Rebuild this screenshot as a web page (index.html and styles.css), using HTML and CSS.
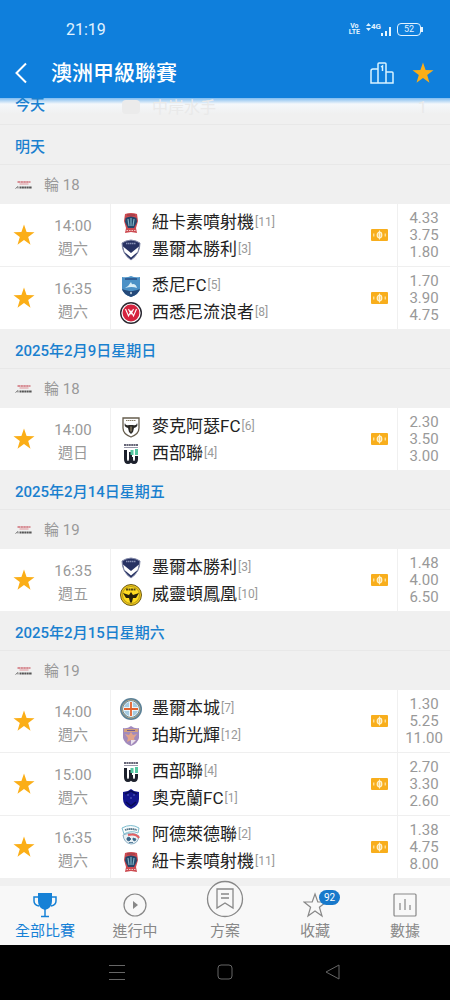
FILE: index.html
```html
<!DOCTYPE html>
<html lang="zh-Hant">
<head>
    <meta charset="UTF-8">
    <meta name="viewport" content="width=device-width, initial-scale=1">
    <title>澳洲甲級聯賽</title>
    <link rel="stylesheet" href="styles.css">
</head>
<body>
<svg class="sprite" aria-hidden="true">
    <symbol id="star" viewBox="0 0 22 22">
        <path d="M11 .5l2.600 7.500 7.900.2-6.300 4.800 2.300 7.700-6.500-4.600-6.500 4.600L6.800 13 .5 8.200 8.400 8z"/>
    </symbol>
    <symbol id="league" viewBox="0 0 18 12">
        <path d="M2.500 3h13" fill="none" stroke="#cf6f78" stroke-width="1.600" stroke-dasharray="2.500 .4"/>
        <path d="M4.500 5h9" fill="none" stroke="#e2a3a8" stroke-width="1.200"/>
        <path d="M.5 9.500L3 7.500v2" fill="none" stroke="#777"/>
        <path d="M4.500 8.500H17" fill="none" stroke="#555" stroke-width="2.200" stroke-dasharray="2 .4"/>
    </symbol>
    <symbol id="cash" viewBox="0 0 17 12">
        <rect width="17" height="12" rx="1" fill="#f8ae1c"/>
        <ellipse cx="8.500" cy="6" rx="2.300" ry="2.800" fill="#fbcf72" stroke="#fff3cf" stroke-width="1.200"/>
        <path d="M8.500 1.500v9M2.800 4.500v3M14.200 4.500v3" stroke="#fff3cf" stroke-width="1"/>
    </symbol>
    <symbol id="jets" viewBox="0 0 22 22">
        <path d="M5 2q6-2 12 0l1 7-2 7 1 5-6-1-6 1 1-5-2-7z" fill="#cc4a50"/>
        <path d="M5.500 6q5.500-3 11 0l.5 4-3 6H8l-3-6z" fill="#24466a"/>
        <path d="M8 7l1 7M11 6v8M14 7l-1 7" stroke="#7db2c4" stroke-width="1.200"/>
        <path d="M7 3h8" stroke="#8e3745" stroke-width="1"/>
        <path d="M6.500 18.500h9" stroke="#f2c5c4" stroke-width="1.200" stroke-dasharray="1.500 1"/>
    </symbol>
    <symbol id="victory" viewBox="0 0 22 22">
        <path d="M2 4l4-2 5-1 5 1 4 2q0 11-9 17Q2 15 2 4z" fill="#273263" stroke="#8389a8"/>
        <path d="M3 7.500l8 6.500 8-6.500-1.500 5.500L11 18.500 4.500 13z" fill="#fff"/>
        <path d="M6 4.500h10" stroke="#8790b4" stroke-width="1.500" stroke-dasharray="1.500 .5"/>
    </symbol>
    <symbol id="sydney" viewBox="0 0 22 22">
        <path d="M2 2q5 1 9-1 4 2 9 1v12q-1 5-9 8-8-3-9-8z" fill="#4b91c6"/>
        <path d="M2 14q6 2 9 2t9-2q-1 5-9 8-8-3-9-8z" fill="#244979"/>
        <path d="M5 13q4-2 6-6 1 3 2 2 3 0 4 4-5-2-12 0z" fill="#d9eef7"/>
        <path d="M5 4h12" stroke="#315f96" stroke-width="2"/>
        <path d="M11 16.500l1 1.500-1 1.500-1-1.500z" fill="#e8f3f7"/>
    </symbol>
    <symbol id="wanderers" viewBox="0 0 22 22">
        <circle cx="11" cy="11" r="11" fill="#292730"/>
        <circle cx="11" cy="11" r="9" fill="#d5233e" stroke="#fff" stroke-width="1.200"/>
        <path d="M5.500 7l3 7L11 9l2.500 5 3-7M8.500 7l2.500 5 2.500-5" fill="none" stroke="#fff" stroke-width="1.100"/>
    </symbol>
    <symbol id="macarthur" viewBox="0 0 22 22">
        <path d="M3 2h16v10q0 6-8 9-8-3-8-9z" fill="#fff" stroke="#665d4d" stroke-width="1.300"/>
        <path d="M6 4.500h10" stroke="#8c8068" stroke-width="1.200" stroke-dasharray="1.500 .5"/>
        <path d="M5 6.500q0 3.500 4 2.500h4q4 1 4-2.500 1.500 4.500-3 5.500l-1 4-2 2-2-2-1-4q-4.500-1-3-5.500z" fill="#2b2926"/>
        <path d="M11 10.500v5" stroke="#b5a47e" stroke-width="1"/>
    </symbol>
    <symbol id="western" viewBox="0 0 22 22">
        <path d="M4 2h14" stroke="#667" stroke-width="2" stroke-dasharray="2 .4"/>
        <path d="M4 4.500h14" stroke="#99a" stroke-width="1"/>
        <path d="M5.500 7v9q0 3.500 2.500 3.500T10.500 16V9M11.500 14v2q0 3.500 2.500 3.500T16.500 16v-3" fill="none" stroke="#1c202c" stroke-width="3"/>
        <path d="M10.500 7h3v5h-3zM15 6h3v6h-3z" fill="#55c8a2"/>
    </symbol>
    <symbol id="phoenix" viewBox="0 0 22 22">
        <circle cx="11" cy="11" r="10.500" fill="#eec51b" stroke="#6d5c16"/>
        <circle cx="11" cy="11" r="8.500" fill="#ffdc21" stroke="#b79d19"/>
        <path d="M3 9l6 2 2-3 2 3 6-2-3 5-3 0-1 4-1 1-1-1-1-4-3 0z" fill="#29230b"/>
        <path d="M6 5.500h10" stroke="#524610" stroke-width="2" stroke-dasharray="2 .5"/>
    </symbol>
    <symbol id="city" viewBox="0 0 22 22">
        <circle cx="11" cy="11" r="11" fill="#5b8197"/>
        <circle cx="11" cy="11" r="9" fill="none" stroke="#b2a789"/>
        <circle cx="11" cy="11" r="7.500" fill="#a5cce2" stroke="#e8f1f3"/>
        <path d="M11 4v14M4 11h14" stroke="#fff" stroke-width="3.500"/>
        <path d="M11 4v14M4 11h14" stroke="#e3632e" stroke-width="1.800"/>
    </symbol>
    <symbol id="perth" viewBox="0 0 22 22">
        <path d="M3 3q4 1 8-2 4 3 8 2v10q-1 5-8 8-7-3-8-8z" fill="#a28abc"/>
        <path d="M4 4h14v3H4z" fill="#d4a07d"/>
        <path d="M5 9l4 1 2-3 2 3 4-1-3 4 1 4-4-2-4 2 1-4z" fill="#e1a38a"/>
        <path d="M11 15h5l-5 5z" fill="#e9e1ec"/>
        <path d="M7 5.500h8" stroke="#715b91"/>
    </symbol>
    <symbol id="auckland" viewBox="0 0 22 22">
        <path d="M3 4l5-1 3-2 3 2 5 1v7q0 7-8 10-8-3-8-10z" fill="#13158d"/>
        <path d="M5 6l6-3 6 3M6 14l5 4 5-4" fill="none" stroke="#080c54" stroke-width="1.500"/>
        <path d="M7 7h2M13 7h2M10 10h2" stroke="#5e66c0"/>
    </symbol>
    <symbol id="adelaide" viewBox="0 0 22 22">
        <path d="M3 11q9-4 16 1-1 8-8 8-7-1-8-9z" fill="#e8f0f4" stroke="#8aaec4"/>
        <path d="M2 4q9-5 17 0l-1 5q-7-3-14 1z" fill="#f7fbfc" stroke="#7fbed0"/>
        <path d="M5 6q6-2 12 0" fill="none" stroke="#58788c" stroke-width="1.800" stroke-dasharray="1.500 .4"/>
        <path d="M8 11q8-2 11 3" fill="none" stroke="#e45f62" stroke-width="2"/>
        <path d="M7 14l2-1 2 2-2 2-2-1zM13 14l3 1-1 2-2-1zM9 18.500h4" fill="#386487" stroke="#386487" stroke-width=".8"/>
    </symbol>
</svg>

<header class="header">
    <div class="status">
        <span class="clock">21:19</span>
        <div class="status-icons">
            <span class="volte"><span>Vo</span><span>LTE</span></span>
            <span class="signal">
                <svg width="5" height="8" viewBox="0 0 5 8" aria-hidden="true">
                    <path d="M0 3l2.500-3L5 3zM0 5h5L2.500 8z" fill="#d9efff"/>
                </svg>
                <span>4G</span>
                <svg width="12" height="9" viewBox="0 0 12 9" aria-hidden="true">
                    <path d="M0 6h2v3H0zM4 4h2v5H4zM8 0h2v9H8z" fill="#e9f7ff"/>
                </svg>
            </span>
            <span class="battery">52</span>
        </div>
    </div>
    <div class="titlebar">
        <button class="icon-btn" aria-label="返回">
            <svg width="14" height="22" viewBox="0 0 14 22"><path d="M12 1.500L2.500 11l9.500 9.500" fill="none" stroke="#fff" stroke-width="2"/></svg>
        </button>
        <h1>澳洲甲級聯賽</h1>
        <button class="icon-btn" aria-label="積分榜">
            <svg width="24" height="22" viewBox="0 0 24 22"><path d="M8 7H3q-2 0-2 2v12h22V11q0-1-1-1h-6M8 21V2q0-1 1-1h6q1 0 1 1v19M11 5l1.500-1v5" fill="none" stroke="#d9f3ff" stroke-width="1.500"/></svg>
        </button>
        <button class="icon-btn" aria-label="收藏聯賽">
            <svg class="star" width="22" height="22"><use href="#star"/></svg>
        </button>
    </div>
</header>

<main class="list">
    <div class="today">
        <h2>今天</h2>
        <div class="ghost" aria-hidden="true"><i></i><span>中岸水手</span><span class="ghost-score">1</span></div>
    </div>

    <section>
        <h2 class="day">明天</h2>
        <div class="round"><svg width="18" height="12"><use href="#league"/></svg>輪 18</div>
        <article class="match">
            <button class="fav" aria-label="收藏"><svg class="star" width="22" height="22"><use href="#star"/></svg></button>
            <div class="time"><span>14:00</span><span>週六</span></div>
            <div class="teams">
                <div class="team"><svg><use href="#jets"/></svg>紐卡素噴射機<small>[11]</small></div>
                <div class="team"><svg><use href="#victory"/></svg>墨爾本勝利<small>[3]</small></div>
            </div>
            <svg class="cash"><use href="#cash"/></svg>
            <div class="odds"><span>4.33</span><span>3.75</span><span>1.80</span></div>
        </article>
        <article class="match">
            <button class="fav" aria-label="收藏"><svg class="star" width="22" height="22"><use href="#star"/></svg></button>
            <div class="time"><span>16:35</span><span>週六</span></div>
            <div class="teams">
                <div class="team"><svg><use href="#sydney"/></svg>悉尼FC<small>[5]</small></div>
                <div class="team"><svg><use href="#wanderers"/></svg>西悉尼流浪者<small>[8]</small></div>
            </div>
            <svg class="cash"><use href="#cash"/></svg>
            <div class="odds"><span>1.70</span><span>3.90</span><span>4.75</span></div>
        </article>
    </section>

    <section>
        <h2 class="day">2025年2月9日星期日</h2>
        <div class="round"><svg width="18" height="12"><use href="#league"/></svg>輪 18</div>
        <article class="match">
            <button class="fav" aria-label="收藏"><svg class="star" width="22" height="22"><use href="#star"/></svg></button>
            <div class="time"><span>14:00</span><span>週日</span></div>
            <div class="teams">
                <div class="team"><svg><use href="#macarthur"/></svg>麥克阿瑟FC<small>[6]</small></div>
                <div class="team"><svg><use href="#western"/></svg>西部聯<small>[4]</small></div>
            </div>
            <svg class="cash"><use href="#cash"/></svg>
            <div class="odds"><span>2.30</span><span>3.50</span><span>3.00</span></div>
        </article>
    </section>

    <section>
        <h2 class="day">2025年2月14日星期五</h2>
        <div class="round"><svg width="18" height="12"><use href="#league"/></svg>輪 19</div>
        <article class="match">
            <button class="fav" aria-label="收藏"><svg class="star" width="22" height="22"><use href="#star"/></svg></button>
            <div class="time"><span>16:35</span><span>週五</span></div>
            <div class="teams">
                <div class="team"><svg><use href="#victory"/></svg>墨爾本勝利<small>[3]</small></div>
                <div class="team"><svg><use href="#phoenix"/></svg>威靈頓鳳凰<small>[10]</small></div>
            </div>
            <svg class="cash"><use href="#cash"/></svg>
            <div class="odds"><span>1.48</span><span>4.00</span><span>6.50</span></div>
        </article>
    </section>

    <section>
        <h2 class="day">2025年2月15日星期六</h2>
        <div class="round"><svg width="18" height="12"><use href="#league"/></svg>輪 19</div>
        <article class="match">
            <button class="fav" aria-label="收藏"><svg class="star" width="22" height="22"><use href="#star"/></svg></button>
            <div class="time"><span>14:00</span><span>週六</span></div>
            <div class="teams">
                <div class="team"><svg><use href="#city"/></svg>墨爾本城<small>[7]</small></div>
                <div class="team"><svg><use href="#perth"/></svg>珀斯光輝<small>[12]</small></div>
            </div>
            <svg class="cash"><use href="#cash"/></svg>
            <div class="odds"><span>1.30</span><span>5.25</span><span>11.00</span></div>
        </article>
        <article class="match">
            <button class="fav" aria-label="收藏"><svg class="star" width="22" height="22"><use href="#star"/></svg></button>
            <div class="time"><span>15:00</span><span>週六</span></div>
            <div class="teams">
                <div class="team"><svg><use href="#western"/></svg>西部聯<small>[4]</small></div>
                <div class="team"><svg><use href="#auckland"/></svg>奧克蘭FC<small>[1]</small></div>
            </div>
            <svg class="cash"><use href="#cash"/></svg>
            <div class="odds"><span>2.70</span><span>3.30</span><span>2.60</span></div>
        </article>
        <article class="match">
            <button class="fav" aria-label="收藏"><svg class="star" width="22" height="22"><use href="#star"/></svg></button>
            <div class="time"><span>16:35</span><span>週六</span></div>
            <div class="teams">
                <div class="team"><svg><use href="#adelaide"/></svg>阿德萊德聯<small>[2]</small></div>
                <div class="team"><svg><use href="#jets"/></svg>紐卡素噴射機<small>[11]</small></div>
            </div>
            <svg class="cash"><use href="#cash"/></svg>
            <div class="odds"><span>1.38</span><span>4.75</span><span>8.00</span></div>
        </article>
    </section>
</main>

<nav class="tabs">
    <a class="tab active" href="#all">
        <svg width="24" height="26" viewBox="0 0 24 26">
            <path d="M5 1h14v8q0 7-7 9-7-2-7-9z" fill="currentColor"/>
            <path d="M5 5H1v4q0 4 5 5M19 5h4v4q0 4-5 5M12 17v7M8 24.500h8" fill="none" stroke="currentColor" stroke-width="1.500"/>
        </svg>
        全部比賽
    </a>
    <a class="tab" href="#live">
        <svg width="24" height="26" viewBox="0 0 24 26">
            <circle cx="12" cy="13" r="11" fill="none" stroke="currentColor" stroke-width="1.200"/>
            <path d="M10 9l5 4-5 4z" fill="currentColor"/>
        </svg>
        進行中
    </a>
    <a class="tab plan" href="#plan">
        <svg width="38" height="38" viewBox="0 0 38 38">
            <circle cx="19" cy="19" r="17.500" fill="#f8f8f8" stroke="currentColor" stroke-width="1.300"/>
            <path d="M11 9h16v19l-8-5-8 5zM15 14h8M15 18h8" fill="none" stroke="currentColor" stroke-width="1.300"/>
        </svg>
        方案
    </a>
    <a class="tab" href="#favourites">
        <span class="badge-wrap">
            <svg width="24" height="26" viewBox="0 0 24 26"><path d="M12 2l2.800 8H23l-6.600 5.200L19 24l-7-5-7 5 2.600-8.800L1 10h8.200z" fill="none" stroke="currentColor" stroke-width="1.200"/></svg>
            <span class="badge">92</span>
        </span>
        收藏
    </a>
    <a class="tab" href="#stats">
        <svg width="24" height="26" viewBox="0 0 24 26"><rect x="1" y="2" width="22" height="22" rx="1" fill="none" stroke="currentColor" stroke-width="1.200"/><path d="M7 11v7M12 7v11M17 13v5" stroke="currentColor" stroke-width="1.200"/></svg>
        數據
    </a>
</nav>

<div class="system">
    <button aria-label="最近"><svg width="16" height="16" viewBox="0 0 16 16"><path d="M0 1.500h16M0 8.500h16M0 15.500h16"/></svg></button>
    <button aria-label="主畫面"><svg width="16" height="16" viewBox="0 0 16 16"><rect x="1" y="1" width="14" height="14" rx="3"/></svg></button>
    <button aria-label="上一頁"><svg width="16" height="16" viewBox="0 0 16 16"><path d="M1 8l13-7v14z" stroke-linejoin="round"/></svg></button>
</div>
</body>
</html>
```

FILE: styles.css
```css
* {
    box-sizing: border-box;
    margin: 0;
    padding: 0;
}

body {
    display: flex;
    flex-direction: column;
    min-height: 100vh;
    font-family: Roboto, "Noto Sans CJK TC", sans-serif;
    font-size: 15px;
    color: #999;
    background: #f0f0f0;
}

button {
    font: inherit;
    color: inherit;
    background: none;
    border: none;
    cursor: pointer;
}

a {
    text-decoration: none;
}

svg {
    display: block;
    flex: none;
}

.sprite {
    position: absolute;
    width: 0;
    height: 0;
}

.star {
    fill: #fbae17;
}

/* header */
.header {
    padding: 18px 16px 10px 14px;
    color: #fff;
    background: #0f7fdc;
}

.status {
    display: flex;
    justify-content: space-between;
    align-items: center;
    height: 22px;
    padding: 0 13px 0 52px;
    color: #e3f3ff;
}

.clock {
    font-size: 16px;
}

.status-icons {
    display: flex;
    align-items: center;
    gap: 6px;
}

.volte {
    display: flex;
    flex-direction: column;
    align-items: center;
    font-size: 7px;
    line-height: 6px;
    font-weight: 700;
}

.signal {
    display: grid;
    grid-template-columns: 5px 10px 10px;
    align-items: start;
    font-size: 8px;
    line-height: 8px;
    font-weight: 700;
}

.signal svg:last-child {
    margin-top: 4px;
}

.battery {
    position: relative;
    width: 24px;
    border: 1px solid #e3f3ff;
    border-radius: 4px;
    font-size: 9px;
    line-height: 11px;
    text-align: center;
}

.battery::after {
    content: "";
    position: absolute;
    top: 3px;
    right: -3px;
    width: 2px;
    height: 5px;
    background: #e3f3ff;
}

.titlebar {
    display: flex;
    align-items: center;
    gap: 18px;
    margin-top: 18px;
}

.titlebar h1 {
    flex: 1;
    padding-left: 5px;
    font-size: 21px;
    font-weight: 500;
    line-height: 30px;
}

/* fixtures */
.list {
    flex: 1;
    padding-bottom: 8px;
}

.day,
.today {
    padding: 5px 15px 0;
    border-bottom: 1px solid #e8e8e8;
    color: #1a80cf;
    font-size: 15px;
    font-weight: 500;
    line-height: 34px;
}

.today {
    display: flex;
    padding: 0 15px 11px;
    background: linear-gradient(#7fbcf0, #f5f8fb 6px, #f0f0f0 16px);
    line-height: 15px;
}

.today h2 {
    font-size: 15px;
    font-weight: 500;
}

.ghost {
    display: flex;
    flex: 1;
    align-items: center;
    gap: 12px;
    height: 15px;
    padding: 3px 8px 0 77px;
    color: #e9e9e9;
    font-size: 16px;
    font-weight: 400;
}

.ghost i {
    width: 18px;
    height: 14px;
    border-radius: 4px;
    background: #ebebeb;
}

.ghost-score {
    margin-left: auto;
}

.round {
    display: flex;
    align-items: center;
    gap: 11px;
    padding: 1px 15px 0;
    line-height: 38px;
}

.match {
    display: flex;
    align-items: center;
    background: #fff;
}

.match + .match {
    border-top: 1px solid #efefef;
}

.fav {
    padding: 0 13px;
}

.time {
    display: flex;
    flex-direction: column;
    width: 50px;
    padding-top: 5px;
    text-align: center;
    line-height: 23px;
}

.teams {
    flex: 1;
    margin-left: 12px;
    padding: 5px 0 3px 9px;
    border-left: 1px solid #f0f0f0;
}

.team {
    display: flex;
    align-items: center;
    color: #222;
    font-size: 17px;
    line-height: 27px;
}

.team svg {
    width: 22px;
    height: 22px;
    margin-right: 10px;
}

.team small {
    margin-left: 1px;
    color: #999;
    font-size: 12px;
}

.cash {
    width: 17px;
    height: 12px;
    margin-right: 9px;
}

.odds {
    display: flex;
    flex-direction: column;
    width: 53px;
    padding: 6px 0 5px;
    border-left: 1px solid #f0f0f0;
    text-align: center;
    line-height: 17px;
}

/* bottom tabs */
.tabs {
    display: grid;
    grid-template-columns: repeat(5, 1fr);
    background: #f8f8f8;
}

.tab {
    display: flex;
    flex-direction: column;
    align-items: center;
    padding: 6px 0 0;
    color: #888;
    font-size: 15px;
    line-height: 27px;
}

.tab.active {
    color: #1681d6;
}

.plan svg {
    margin-top: -12px;
}

.badge-wrap {
    position: relative;
}

.badge {
    position: absolute;
    top: -2px;
    left: 16px;
    width: 21px;
    border-radius: 8px;
    color: #fff;
    background: #1879cb;
    font-size: 10px;
    line-height: 15px;
    text-align: center;
}

/* system bar */
.system {
    display: flex;
    justify-content: center;
    gap: 92px;
    padding: 19px 0 20px;
    background: #000;
}

.system svg {
    fill: none;
    stroke: #666;
}
```
